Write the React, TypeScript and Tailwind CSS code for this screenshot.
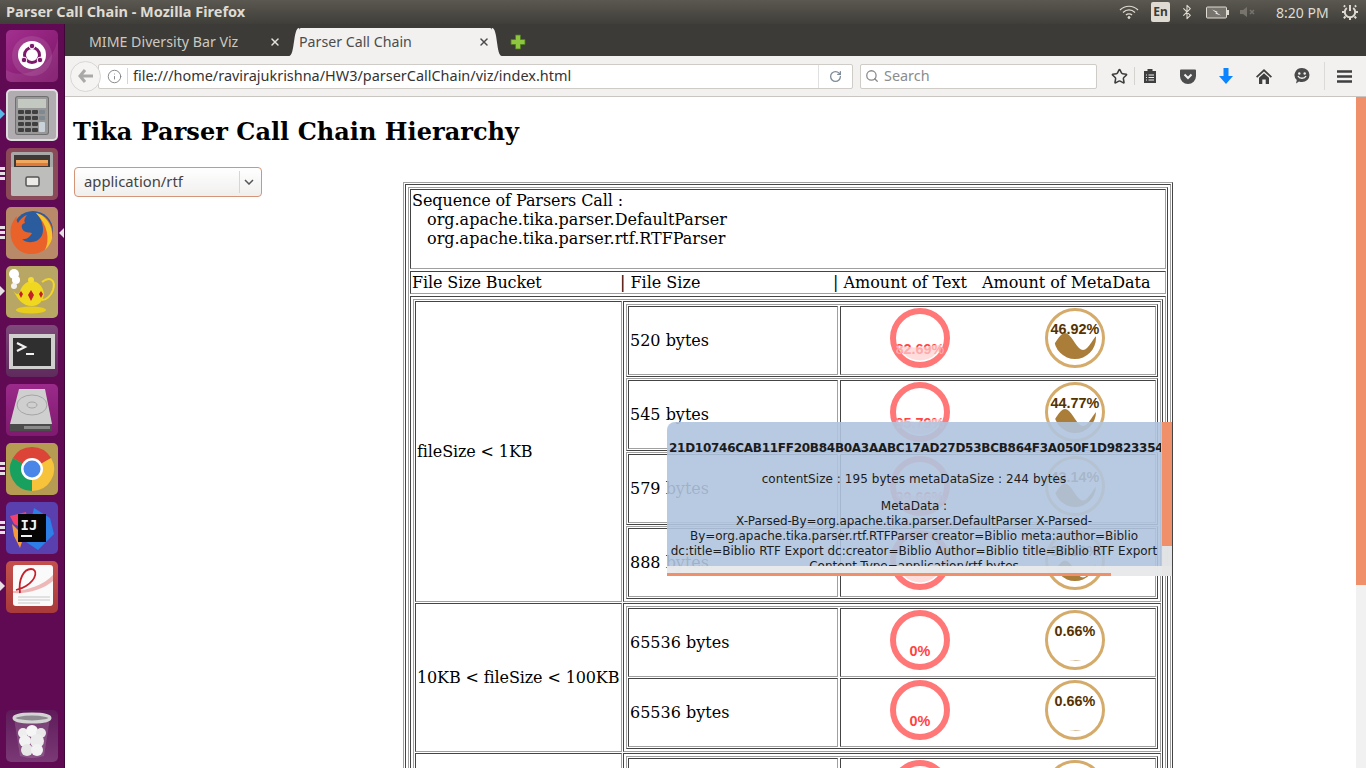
import React from "react";
import { Info, Search, Star, RotateCw, X, Bluetooth } from "lucide-react";

const outset = "border border-t-[#a0a0a0] border-l-[#a0a0a0] border-r-[#444444] border-b-[#444444]";
const inset = "border border-t-[#444444] border-l-[#444444] border-r-[#a0a0a0] border-b-[#a0a0a0]";

type GaugeProps = {
  id: string;
  kind: "text" | "meta";
  label: string;
  level?: number;
  amp?: number;
  phase?: number;
};

const wavePath = (level: number, amp: number, phase: number, period: number) => {
  let d = `M0 60 L0 ${level}`;
  for (let x = 0; x <= 60; x += 2) {
    d += ` L${x} ${(level + amp * Math.sin(((x - phase) / period) * Math.PI * 2)).toFixed(2)}`;
  }
  return d + " L60 60 Z";
};

const Gauge = ({ id, kind, label, level, amp = 1.5, phase = 11 }: GaugeProps) => {
  const isText = kind === "text";
  const ring = isText ? "#FF7777" : "#D4AB6A";
  const textColor = isText ? "#FF4444" : "#553300";
  const waveText = isText ? "#FFAAAA" : "#805615";
  const waveColor = isText ? "#FFDDDD" : "#AA7D39";
  const thick = isText ? 6 : 3;
  const inner = isText ? 22.5 : 21;
  const y = isText ? 45.5 : 26;
  const textClass = "font-['Liberation_Sans'] text-[14.4px] font-bold";
  return (
    <svg width="60" height="60" viewBox="0 0 60 60" className="flex-none">
      <circle cx="30" cy="30" r={30 - thick / 2} fill="none" stroke={ring} strokeWidth={thick} />
      <text x="30" y={y} textAnchor="middle" fill={textColor} className={textClass}>
        {label}
      </text>
      {level !== undefined && (
        <>
          <clipPath id={id}>
            <path d={wavePath(level, amp, phase, isText ? 60 : 36)} />
          </clipPath>
          <g clipPath={`url(#${id})`}>
            <circle cx="30" cy="30" r={inner} fill={waveColor} />
            <text x="30" y={y} textAnchor="middle" fill={waveText} className={textClass}>
              {label}
            </text>
          </g>
        </>
      )}
    </svg>
  );
};

type RowData = {
  size: string;
  red: Omit<GaugeProps, "id" | "kind">;
  tan: Omit<GaugeProps, "id" | "kind">;
};

const Row = ({ row, id }: { row: RowData; id: string }) => (
  <div className="flex gap-[2px]">
    <div className={`${inset} flex h-[69px] w-[210px] flex-none items-center px-px`}>{row.size}</div>
    <div className={`${inset} flex h-[69px] w-[316px] flex-none gap-[95px] pl-[49px] pt-px`}>
      <Gauge id={`${id}r`} kind="text" {...row.red} />
      <Gauge id={`${id}t`} kind="meta" {...row.tan} />
    </div>
  </div>
);

const Nested = ({ rows, id }: { rows: RowData[]; id: string }) => (
  <div className={`${outset} flex flex-col gap-px p-px`}>
    {rows.map((r, i) => (
      <Row key={i} row={r} id={`${id}${i}`} />
    ))}
  </div>
);

const tanRows = { amp: 8.5, phase: 29 };

const smallRows: RowData[] = [
  { size: "520 bytes", red: { label: "82.69%", level: 38 }, tan: { label: "46.92%", level: 33.5, ...tanRows } },
  { size: "545 bytes", red: { label: "95.79%", level: 38 }, tan: { label: "44.77%", level: 35.5, ...tanRows } },
  { size: "579 bytes", red: { label: "99.66%", level: 38 }, tan: { label: "43.14%", level: 36, ...tanRows } },
  { size: "888 bytes", red: { label: "99.66%", level: 38 }, tan: { label: "30.18%", level: 39, ...tanRows } },
];

const midRows: RowData[] = [
  { size: "65536 bytes", red: { label: "0%" }, tan: { label: "0.66%", level: 50.6, amp: 0.2 } },
  { size: "65536 bytes", red: { label: "0%" }, tan: { label: "0.66%", level: 50.6, amp: 0.2 } },
];

const ParserTable = () => (
  <div className={`${outset} ml-[141px] mt-[15px] w-[770px] flex-none p-px`}>
    <div className={`${inset} p-[2px]`}>
      <div className={`${outset} flex flex-col gap-[2px] p-px`}>
        <div className={`${inset} p-px`}>
          <div className="tracking-[-0.08px]">Sequence of Parsers Call :</div>
          <div className="pl-[15px]">org.apache.tika.parser.DefaultParser</div>
          <div className="pl-[15px]">org.apache.tika.parser.rtf.RTFParser</div>
          <div className="h-[19px]" />
        </div>
        <div className={`${inset} grid grid-cols-[208px_213px_149px_1fr] whitespace-nowrap p-px`}>
          <div className="tracking-[-0.12px]">File Size Bucket</div>
          <div>| File Size</div>
          <div>| Amount of Text</div>
          <div className="tracking-[-0.05px]">Amount of MetaData</div>
        </div>
        <div className={`${inset} p-[2px]`}>
          <div className={`${outset} flex flex-col gap-px p-px`}>
            <div className="flex gap-px">
              <div className={`${inset} flex w-[207px] flex-none items-center whitespace-nowrap px-px tracking-[-0.12px]`}>fileSize &lt; 1KB</div>
              <div className={`${inset} flex flex-1 flex-col gap-px p-[2px]`}>
                {smallRows.map((r, i) => (
                  <Nested key={i} rows={[r]} id={`a${i}`} />
                ))}
              </div>
            </div>
            <div className="flex gap-px">
              <div className={`${inset} flex w-[207px] flex-none items-center whitespace-nowrap px-px tracking-[-0.12px]`}>10KB &lt; fileSize &lt; 100KB</div>
              <div className={`${inset} flex flex-1 flex-col p-[2px]`}>
                <Nested rows={midRows} id="b" />
              </div>
            </div>
            <div className="flex gap-px">
              <div className={`${inset} flex w-[207px] flex-none items-center whitespace-nowrap px-px tracking-[-0.12px]`}>100KB &lt; fileSize &lt; 1MB</div>
              <div className={`${inset} flex flex-1 flex-col p-[2px]`}>
                <Nested rows={[{ size: "131072 bytes", red: { label: "0%" }, tan: { label: "0.66%", level: 50.6, amp: 0.2 } }]} id="c" />
              </div>
            </div>
          </div>
        </div>
      </div>
    </div>
  </div>
);

const DetailTip = () => (
  <div className="absolute left-[602px] top-[325px] h-[154px] w-[505px] overflow-hidden rounded-tl-[8px] font-['DejaVu_Sans'] text-[12px] leading-[15px] text-[#1c1c1c]">
    <div className="absolute inset-0 bg-[#b0c4de] opacity-90" />
    <div className="relative h-[144px] w-[494px] overflow-hidden text-center">
      <div className="mt-[19px] overflow-hidden whitespace-nowrap pl-[2px] text-left font-bold tracking-[-0.27px]">
        21D10746CAB11FF20B84B0A3AABC17AD27D53BCB864F3A050F1D9823354
      </div>
      <div className="mt-[16px] tracking-[0.06px]">contentSize : 195 bytes metaDataSize : 244 bytes</div>
      <div className="mt-[12px]">MetaData :</div>
      <div className="tracking-[-0.1px]">X-Parsed-By=org.apache.tika.parser.DefaultParser X-Parsed-</div>
      <div className="tracking-[-0.05px]">By=org.apache.tika.parser.rtf.RTFParser creator=Biblio meta:author=Biblio</div>
      <div className="whitespace-nowrap tracking-[-0.025px]">dc:title=Biblio RTF Export dc:creator=Biblio Author=Biblio title=Biblio RTF Export</div>
      <div>Content-Type=application/rtf bytes</div>
    </div>
    <div className="absolute bottom-0 left-0 h-[10px] w-full bg-[#ececec]/90" />
    <div className="absolute bottom-0 left-0 h-[3px] w-[444px] bg-[#f0906a]" />
    <div className="absolute bottom-0 right-0 top-0 w-[10px] bg-[#e6e6e6]/90" />
    <div className="absolute right-0 top-0 h-[124px] w-[10px] bg-[#f0906a]" />
  </div>
);

const Tile = ({ className, pip, children }: { className: string; pip?: React.ReactNode; children: React.ReactNode }) => (
  <div className="relative h-[52px] w-[52px] flex-none">
    <div className={`h-full w-full overflow-hidden rounded-[5px] ${className}`}>
      <svg width="52" height="52" viewBox="0 0 52 52">
        {children}
      </svg>
    </div>
    {pip}
  </div>
);

const Dashes = () => (
  <div className="absolute left-[-6px] top-[19px] flex flex-col gap-[2px]">
    <div className="h-[3px] w-[5px] bg-[#e6dfe4]" />
    <div className="h-[3px] w-[5px] bg-[#e6dfe4]" />
    <div className="h-[3px] w-[5px] bg-[#e6dfe4]" />
  </div>
);

const Arrow = ({ color = "#e6dfe4" }: { color?: string }) => (
  <svg width="5" height="10" viewBox="0 0 5 10" className="absolute left-[-6px] top-[20px]">
    <path d="M0 0 L5 5 L0 10 Z" fill={color} />
  </svg>
);

const Dock = () => (
  <div className="flex h-full w-[65px] flex-none flex-col gap-[7px] border-r border-[#3f0638] bg-[#5f0a53] pb-[6px] pl-[6px] pt-[6px]">
    <Tile className="bg-gradient-to-br from-[#a3308f] to-[#7d1268]">
      <path d="M0 40 C16 50 46 40 52 8 V52 H0 Z" fill="#ffffff" opacity="0.08" />
      <circle cx="26" cy="26" r="20" fill="#ffffff" opacity="0.1" />
      <circle cx="26" cy="25" r="14" fill="#ffffff" />
      <circle cx="26" cy="25" r="7.5" fill="none" stroke="#7d1a6b" strokeWidth="3" />
      <circle cx="26" cy="16" r="2.8" fill="#7d1a6b" stroke="#ffffff" />
      <circle cx="18" cy="30" r="2.8" fill="#7d1a6b" stroke="#ffffff" />
      <circle cx="34" cy="30" r="2.8" fill="#7d1a6b" stroke="#ffffff" />
    </Tile>
    <Tile className="border-2 border-[#e0dde0] bg-[#b0acb0]" pip={<Arrow color="#58b8e8" />}>
      <rect x="7" y="5" width="34" height="39" rx="3" fill="#6f6f6f" />
      <rect x="8" y="6" width="32" height="37" rx="2" fill="#989898" />
      <rect x="10" y="8" width="28" height="9" fill="#c3c9c0" />
      {[19, 25, 31, 37].map((y) =>
        [10, 17, 24, 31].map((x) =>
          x === 31 && y > 25 ? null : <rect key={`${x}${y}`} x={x} y={y} width="6" height="4" rx="1" fill={x === 31 ? "#7f8a90" : "#3f3f3f"} />
        )
      )}
      <rect x="31" y="31" width="6" height="10" rx="1" fill="#c9d2d8" />
    </Tile>
    <Tile className="bg-[#8b4a58]" pip={<Dashes />}>
      <rect x="5" y="4" width="42" height="44" rx="2" fill="#a8a8a8" />
      <rect x="8" y="7" width="36" height="12" fill="#3f3a35" />
      <rect x="10" y="12" width="32" height="3" fill="#f0a860" />
      <rect x="10" y="15" width="32" height="3" fill="#e07a3a" />
      <path d="M5 19 H47 V46 a2 2 0 0 1 -2 2 H7 a2 2 0 0 1 -2 -2 Z" fill="#bdbdbb" />
      <rect x="20" y="29" width="13" height="9" rx="1.5" fill="#ecebe8" stroke="#555555" strokeWidth="1.5" />
    </Tile>
    <Tile className="bg-[#b88a6a]" pip={<><Dashes /><svg width="5" height="10" viewBox="0 0 5 10" className="absolute left-[53px] top-[21px]"><path d="M5 0 L0 5 L5 10 Z" fill="#e6dfe4" /></svg></>}>
      <circle cx="27" cy="24" r="20" fill="#2a5c9e" />
      <path d="M30 6 C42 8 49 20 46 32 C42 46 26 50 16 45 C7 41 3 30 5 20 C6 15 9 11 11 9 C10 13 11 15 12 16 C14 12 18 9 21 8 C18 12 18 14 19 16 C15 17 15 20 17 23 C19 26 23 25 26 26 C24 30 20 33 16 32 C21 37 31 36 35 30 C39 24 37 13 30 6 Z" fill="#e8622a" />
      <path d="M30 6 C40 8 48 20 46 32 C44 38 41 41 39 43 C44 33 42 18 30 6 Z" fill="#f6c52c" />
    </Tile>
    <Tile className="bg-[#b8a664]" pip={<Arrow />}>
      <circle cx="8" cy="8" r="5" fill="#ffffff" />
      <circle cx="10" cy="14" r="4" fill="#ffffff" />
      <circle cx="8" cy="20" r="3" fill="#f4f4f4" />
      <path d="M36 16 C44 10 50 14 47 24 C45 30 40 34 36 34" fill="none" stroke="#f2d62a" strokeWidth="2" />
      <path d="M7 24 C11 30 12 28 14 26 C15 20 20 16 25 15 C31 15 37 19 38 28 C37 36 32 40 26 40 C17 40 12 34 7 24 Z" fill="#f0d821" />
      <ellipse cx="25" cy="44" rx="15" ry="3.5" fill="#e8cc1e" />
      <circle cx="25" cy="14" r="3" fill="#f4dc30" />
      <path d="M25 24 L28 29 L25 35 L22 29 Z M15 25 L17 28 L15 32 L13 28 Z M35 25 L37 28 L35 32 L33 28 Z" fill="#c3202a" />
    </Tile>
    <Tile className="bg-gradient-to-b from-[#7d4a7a] to-[#5f2a5c]">
      <rect x="3" y="9" width="46" height="35" fill="#d0d0ce" />
      <rect x="7" y="13" width="38" height="28" fill="#2f2f2f" />
      <path d="M11 18 L19 22 L11 26" fill="none" stroke="#f2f2f2" strokeWidth="2.2" />
      <rect x="20" y="28" width="8" height="2" fill="#f2f2f2" />
    </Tile>
    <Tile className="bg-gradient-to-b from-[#9b2a8a] to-[#7f1a70]">
      <path d="M13 5 H39 L46 40 V47 H4 V40 Z" fill="#cfcfcf" />
      <ellipse cx="26" cy="21" rx="15" ry="10" fill="none" stroke="#a5a5a5" />
      <ellipse cx="26" cy="21" rx="5" ry="3" fill="none" stroke="#a5a5a5" />
      <rect x="4" y="40" width="42" height="7" fill="#4c4c4c" />
      <rect x="18" y="42" width="26" height="3" fill="#8a8a8a" />
    </Tile>
    <Tile className="bg-[#b59c52]" pip={<Dashes />}>
      <path d="M6.9 15 A22 22 0 0 1 45.1 15 L26 26 Z" fill="#db4437" />
      <path d="M45.1 15 A22 22 0 0 1 26 48 L26 26 Z" fill="#f6c33a" />
      <path d="M26 48 A22 22 0 0 1 6.9 15 L26 26 Z" fill="#18a05e" />
      <circle cx="26" cy="26" r="11" fill="#ffffff" />
      <circle cx="26" cy="26" r="8.5" fill="#4a86e8" />
    </Tile>
    <Tile className="bg-[#5a3fae]" pip={<Dashes />}>
      <path d="M4 14 L20 10 L24 30 L8 22 Z" fill="#f5406e" />
      <path d="M28 6 L44 16 L48 32 L32 48 L20 40 Z" fill="#2d7ee6" />
      <path d="M6 22 L18 34 L14 46 L8 34 Z" fill="#f59a3a" />
      <rect x="12" y="12" width="28" height="28" fill="#050505" />
      <text x="14.5" y="28" fill="#f2f2f2" className="font-['DejaVu_Sans_Mono'] text-[14px] font-bold">IJ</text>
      <rect x="15" y="33" width="11" height="2" fill="#f2f2f2" />
    </Tile>
    <Tile className="bg-gradient-to-b from-[#c4504c] to-[#a83a3a]" pip={<Arrow />}>
      <rect x="7" y="4" width="40" height="41" rx="3" fill="#fafafa" />
      <path d="M7 30 C20 30 38 24 47 14 V20 C38 28 22 33 7 32 Z" fill="#eeb8b8" />
      <path d="M14 32 C12 18 18 8 25 8 C32 8 31 18 20 25 C17 27 14 28 10 29" fill="none" stroke="#c8202a" strokeWidth="1.8" />
      <path d="M12 36 H44 M12 39 H44 M12 42 H34" stroke="#c8c8c8" />
    </Tile>
    <div className="mt-auto">
      <Tile className="bg-gradient-to-b from-[#5f1a5a] to-[#7a3a76]">
        <path d="M8 8 L14 46 Q26 50 38 46 L44 8 Z" fill="#ffffff" opacity="0.15" />
        <ellipse cx="26" cy="8" rx="18" ry="4" fill="#8f8a8f" stroke="#d4d4d4" strokeWidth="3" />
        <circle cx="17" cy="23" r="5" fill="#eeeeee" />
        <circle cx="26" cy="21" r="6" fill="#f6f6f6" />
        <circle cx="35" cy="23" r="5" fill="#e8e8e8" />
        <circle cx="19" cy="31" r="6" fill="#f2f2f2" />
        <circle cx="31" cy="31" r="7" fill="#ececec" />
        <circle cx="21" cy="40" r="6" fill="#e6e6e6" />
        <circle cx="31" cy="40" r="6" fill="#f2f2f2" />
      </Tile>
    </div>
  </div>
);

const TopPanel = () => (
  <div className="flex h-6 flex-none items-center bg-gradient-to-b from-[#5a5850] to-[#3f3e39] pl-[6px] font-['Noto_Sans'] text-[#dfdbd2]">
    <div className="text-[14.5px] font-bold">Parser Call Chain - Mozilla Firefox</div>
    <div className="ml-auto flex items-center">
      <svg width="20" height="14" viewBox="0 0 20 14" fill="none" stroke="#dfdbd2">
        <path d="M1 5 C6 0 14 0 19 5" strokeWidth="1.2" />
        <path d="M4 7.5 C7.5 4 12.5 4 16 7.5" strokeWidth="1.2" />
        <path d="M7 10 C8.5 8.5 11.5 8.5 13 10" strokeWidth="1.4" />
        <circle cx="10" cy="12.5" r="1" fill="#dfdbd2" />
      </svg>
      <div className="ml-[12px] flex h-5 w-[19px] items-center justify-center rounded-[2px] bg-[#dfdbd2] text-[12px] font-bold text-[#3c3b37]">En</div>
      <Bluetooth size={16} strokeWidth={1.6} className="ml-[9px]" />
      <svg width="24" height="13" viewBox="0 0 24 13" className="ml-[11px]">
        <rect x="0.5" y="1" width="20" height="11" rx="1" fill="#77746d" stroke="#dfdbd2" />
        <rect x="21" y="4" width="2" height="5" fill="#dfdbd2" />
        <path d="M6 3.5 L12 6 L10.5 6.5 L15 9.5 L9 7.5 L10.5 7 Z" fill="#f2f2f2" />
      </svg>
      <svg width="16" height="12" viewBox="0 0 16 12" className="ml-[10px]">
        <path d="M0 4 H3 L7 1 V11 L3 8 H0 Z" fill="#77746d" />
        <path d="M10 4 L14 8 M14 4 L10 8" stroke="#77746d" strokeWidth="1.5" />
      </svg>
      <div className="ml-[20px] w-[53px] whitespace-nowrap text-[14px]">8:20 PM</div>
      <svg width="16" height="16" viewBox="0 0 16 16" className="ml-[13px] mr-[8px]" fill="none" stroke="#dfdbd2" strokeWidth="2">
        <path d="M4.8 4 A5.2 5.2 0 1 0 11.2 4" />
        <path d="M8 1 V7" />
        <path d="M2.5 8 H0 M16 8 H13.5 M3.5 12.5 L1.8 14.2 M12.5 12.5 L14.2 14.2 M8 13.5 V16 M3.2 2.8 L1.8 1.6 M12.8 2.8 L14.2 1.6" />
      </svg>
    </div>
  </div>
);

const TabStrip = () => (
  <div className="flex h-8 flex-none items-end bg-[#3c3b37] font-['Noto_Sans'] text-[14.2px]">
    <div className="flex h-7 w-[224px] flex-none items-center justify-between pl-6 pr-[8px] text-[#cdc9c0]">
      <span>MIME Diversity Bar Viz</span>
      <X size={12} strokeWidth={3} className="text-[#e4e1da]" />
    </div>
    <svg width="10" height="28" viewBox="0 0 10 28" className="flex-none">
      <path d="M0 28 C6 28 4 0 10 0 V28 Z" fill="#f2f1f0" />
    </svg>
    <div className="flex h-7 w-[193px] flex-none items-center justify-between rounded-t-[2px] bg-[#f2f1f0] pr-[1px] text-[#4c4c4c]">
      <span>Parser Call Chain</span>
      <X size={12} strokeWidth={3} className="mr-[1px] text-[#4c4c4c]" />
    </div>
    <svg width="10" height="28" viewBox="0 0 10 28" className="flex-none">
      <path d="M10 28 C4 28 6 0 0 0 V28 Z" fill="#f2f1f0" />
    </svg>
    <svg width="16" height="16" viewBox="0 0 16 16" className="mb-[6px] ml-[8px] flex-none">
      <path d="M5.5 1 H10.5 V5.5 H15 V10.5 H10.5 V15 H5.5 V10.5 H1 V5.5 H5.5 Z" fill="#8ec63f" stroke="#4f7a1f" strokeWidth="0.8" />
    </svg>
  </div>
);

const IconSlot = ({ className = "", children }: { className?: string; children: React.ReactNode }) => (
  <div className={`flex w-5 flex-none items-center justify-center ${className}`}>{children}</div>
);

const NavBar = () => (
  <div className="flex h-[41px] flex-none items-center border-b border-[#c9c5c1] bg-[#f2f1f0] pl-[5px] font-['Noto_Sans']">
    <div className="relative z-10 flex h-[31px] w-[31px] flex-none items-center justify-center rounded-full border border-[#d9d7d5] bg-[#f5f4f3]">
      <svg width="16" height="14" viewBox="0 0 16 14">
        <path d="M7 1 L2 7 L7 13 M2.5 7 H15" fill="none" stroke="#a9a9a7" strokeWidth="3" />
      </svg>
    </div>
    <div className="-ml-[3px] flex h-[25px] w-[755px] flex-none items-center rounded-[2px] border border-[#cfcbc7] bg-white pl-[8px]">
      <Info size={15} strokeWidth={1.4} className="flex-none text-[#7a7a7a]" />
      <div className="ml-[5px] h-[16px] w-px flex-none bg-[#d5d5d5]" />
      <div className="ml-[5px] flex-1 whitespace-nowrap text-[14.45px] text-[#333333]">file:///home/ravirajukrishna/HW3/parserCallChain/viz/index.html</div>
      <div className="h-[23px] w-px flex-none bg-[#e0e0e0]" />
      <RotateCw size={13} strokeWidth={2.4} className="mx-[10px] flex-none text-[#7f8b98]" />
    </div>
    <div className="ml-[7px] flex h-[25px] w-[237px] flex-none items-center rounded-[2px] border border-[#cfcbc7] bg-white pl-[4px] text-[14.4px] text-[#8c8c8c]">
      <Search size={14} strokeWidth={2.2} className="flex-none text-[#8a8a8a]" />
      <span className="ml-[5px]">Search</span>
    </div>
    <IconSlot className="ml-[12px]">
      <Star size={17} strokeWidth={2.2} className="text-[#3c3c3c]" />
    </IconSlot>
    <div className="ml-[5px] h-[18px] w-px flex-none bg-[#d5d3d0]" />
    <IconSlot className="ml-[5px]">
      <svg width="14" height="16" viewBox="0 0 14 16">
        <path d="M1 3 H4.5 V1 H9.5 V3 H13 V15 H1 Z" fill="#3f3f3f" />
        <path d="M3 7 H4 M5.5 7 H11 M3 9.5 H4 M5.5 9.5 H11 M3 12 H4 M5.5 12 H11" stroke="#f2f1f0" />
      </svg>
    </IconSlot>
    <IconSlot className="ml-[18px]">
      <svg width="16" height="15" viewBox="0 0 16 15">
        <path d="M1 0.5 H15 A1 1 0 0 1 16 1.5 V7 A8 8 0 0 1 0 7 V1.5 A1 1 0 0 1 1 0.5 Z" fill="#4d4d4d" />
        <path d="M4.5 5.5 L8 9 L11.5 5.5" fill="none" stroke="#f2f1f0" strokeWidth="2" />
      </svg>
    </IconSlot>
    <IconSlot className="ml-[18px]">
      <svg width="14" height="16" viewBox="0 0 14 16">
        <path d="M4.5 0 H9.5 V8 H14 L7 16 L0 8 H4.5 Z" fill="#0a84ff" />
      </svg>
    </IconSlot>
    <IconSlot className="ml-[18px]">
      <svg width="16" height="15" viewBox="0 0 16 15">
        <path d="M8 0 L16 7.5 L14.8 8.8 L8 2.6 L1.2 8.8 L0 7.5 Z" fill="#3f3f3f" />
        <path d="M8 4.2 L13 8.8 V15 H9.7 V10.5 H6.3 V15 H3 V8.8 Z" fill="#3f3f3f" />
      </svg>
    </IconSlot>
    <IconSlot className="ml-[18px]">
      <svg width="16" height="16" viewBox="0 0 16 16">
        <path d="M8 0 A7.5 7 0 0 1 8 14 C7 14 6 14 5 13.5 L2 15.5 L2.8 12 A7.5 7 0 0 1 8 0 Z" fill="#4a4a4a" />
        <circle cx="5.3" cy="5.5" r="1.2" fill="#f2f1f0" />
        <circle cx="10.7" cy="5.5" r="1.2" fill="#f2f1f0" />
        <path d="M4 8 C5.5 11 10.5 11 12 8" fill="none" stroke="#f2f1f0" strokeWidth="1.4" />
      </svg>
    </IconSlot>
    <div className="ml-[12px] h-[28px] w-px flex-none bg-[#dcdad7]" />
    <IconSlot className="ml-[9px]">
      <svg width="15" height="13" viewBox="0 0 15 13">
        <path d="M0 1.5 H15 M0 6.5 H15 M0 11.5 H15" stroke="#3f3f3f" strokeWidth="2.4" />
      </svg>
    </IconSlot>
  </div>
);

const App = () => (
  <div className="flex h-screen w-full flex-col overflow-hidden bg-white">
    <TopPanel />
    <div className="flex min-h-0 flex-1">
      <Dock />
      <div className="flex min-w-0 flex-1 flex-col">
        <TabStrip />
        <NavBar />
        <div className="relative flex min-h-0 flex-1 overflow-hidden">
          <div className="relative min-w-0 flex-1 overflow-hidden font-['DejaVu_Serif'] text-[16px] leading-[19px] text-black">
            <h1 className="ml-2 mt-[21px] text-[24px] font-bold leading-[28px] tracking-[0.03px]">Tika Parser Call Chain Hierarchy</h1>
            <div className="mt-[21px] flex items-start pl-[9px]">
              <div className="flex h-[30px] w-[188px] flex-none items-center rounded-[4px] border border-[#d39478] bg-gradient-to-b from-white to-[#f0efee] pb-px pl-[9px] font-['Noto_Sans'] text-[14.8px] text-[#444444]">
                <span className="flex-1">application/rtf</span>
                <div className="h-[22px] w-px bg-[#d8d6d4]" />
                <svg width="10" height="6" viewBox="0 0 10 6" className="ml-[4px] mr-[7px]">
                  <path d="M1 1 L5 5 L9 1" fill="none" stroke="#555555" strokeWidth="1.5" />
                </svg>
              </div>
              <ParserTable />
            </div>
            <DetailTip />
          </div>
          <div className="flex w-[10px] flex-none flex-col bg-[#f1f1f1]">
            <div className="h-[488px] bg-[#f0906a]" />
          </div>
        </div>
      </div>
    </div>
  </div>
);

export default App;
